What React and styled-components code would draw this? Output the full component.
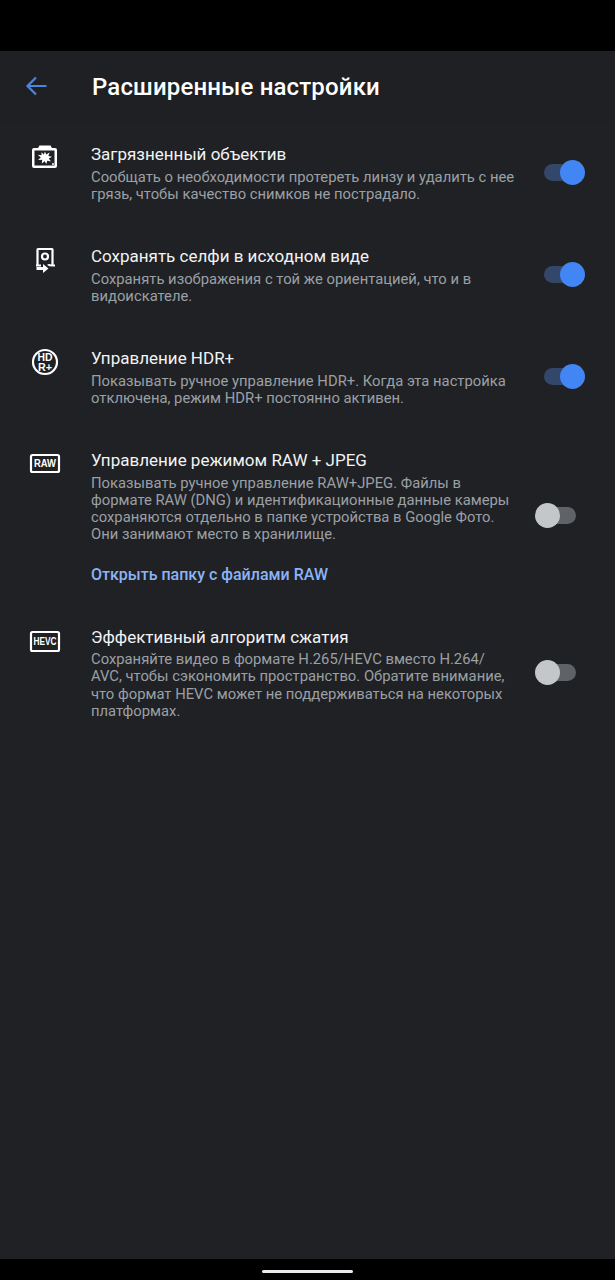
import React from 'react';
import styled, { createGlobalStyle } from 'styled-components';

const GlobalStyle = createGlobalStyle`
	html, body {
		margin: 0;
		padding: 0;
		background: #000;
	}
	* {
		box-sizing: border-box;
	}
`;

const Screen = styled.div`
	width: 615px;
	height: 1280px;
	display: flex;
	flex-direction: column;
	background: #202124;
	font-family: Roboto, 'Noto Sans', sans-serif;
	overflow: hidden;
`;

const StatusBar = styled.div`
	height: 51px;
	background: #000;
`;

const Header = styled.header`
	height: 71px;
	display: flex;
	align-items: center;
	padding-left: 24px;
	background: #1f2023;
`;

const BackIcon = styled.svg`
	width: 24px;
	height: 24px;
	margin-right: 44px;
	margin-top: -2px;
`;

const Title = styled.h1`
	margin: 0;
	font-size: 24px;
	font-weight: 500;
	line-height: 30px;
	letter-spacing: 0.15px;
	color: #fff;
`;

const List = styled.main`
	flex: 1;
	display: flex;
	flex-direction: column;
	gap: 43.2px;
	padding: 22px 30px 0;
`;

const Row = styled.section`
	display: flex;
	align-items: center;
`;

const IconBox = styled.svg`
	flex: none;
	align-self: flex-start;
	width: 30px;
	height: 30px;
	margin-right: 31px;
	overflow: visible;
`;

const IconText = styled.text`
	font-family: 'Liberation Sans', sans-serif;
	font-weight: 700;
	fill: #fff;
	text-anchor: middle;
`;

const Body = styled.div`
	width: 427px;
	flex: none;
`;

const RowTitle = styled.div`
	font-size: 17px;
	line-height: 21px;
	color: #f1f3f4;
`;

const RowText = styled.p`
	margin: 3.5px 0 0;
	font-size: 14.8px;
	line-height: 17.2px;
	color: #9aa0a6;
`;

const RowLink = styled.a`
	display: block;
	margin-top: 21px;
	font-size: 16px;
	font-weight: 500;
	line-height: 19px;
	color: #8ab4f8;
`;

const Switch = styled.div`
	position: relative;
	flex: none;
	width: 32px;
	height: 17px;
	margin: 0 0 2px 26px;
	border-radius: 9px;
	background: ${(props) => (props.on ? '#33476b' : '#5f6368')};
`;

const Knob = styled.span`
	position: absolute;
	top: -4px;
	left: ${(props) => (props.on ? '16px' : '-9px')};
	width: 25px;
	height: 25px;
	border-radius: 50%;
	background: ${(props) => (props.on ? '#4285f4' : '#c4c7c9')};
`;

const NavBar = styled.div`
	height: 21px;
	background: #000;
	display: flex;
	justify-content: center;
	padding-top: 11px;
`;

const Pill = styled.div`
	width: 91px;
	height: 3px;
	border-radius: 2px;
	background: #e8eaed;
`;

const LensIcon = () => (
	<IconBox viewBox="0 0 30 30">
		<path
			fill="#fff"
			fillRule="evenodd"
			d="M8 4 L9.5 1.5 H20.5 L22 4 H25 Q27 4 27 6 V22 Q27 24 25 24 H4 Q2 24 2 22 V6 Q2 4 4 4 Z M4.5 6.5 V21.5 H24.5 V6.5 Z"
		/>
		<path
			fill="#fff"
			d="M15 7.5 L16.2 10.6 L19.6 8.6 L18.4 12 L22 12.8 L18.8 14.6 L21 17.6 L17.2 16.8 L16.4 20 L14.6 17.2 L11.8 19.4 L12.2 15.8 L8 16 L10.8 13.4 L7.8 10.8 L11.6 11.2 L11.4 8.2 L13.8 10.4 Z"
		/>
		<circle cx="23" cy="20" r="1" fill="#fff" />
	</IconBox>
);

const SelfieIcon = () => (
	<IconBox viewBox="0 0 30 30">
		<path
			fill="none"
			stroke="#fff"
			strokeWidth="2.2"
			d="M7.5 19 V3.5 Q7.5 3 8 3 H22 Q22.5 3 22.5 3.5 V19"
		/>
		<circle cx="15" cy="10.5" r="3" fill="none" stroke="#fff" strokeWidth="2.2" />
		<path fill="none" stroke="#fff" strokeWidth="2" d="M6 19.5 H11 M18 19.5 C18.5 18.5 19.5 19.5 25 19.5" />
		<path fill="#fff" d="M6.5 21 H13 V18 L18.5 22.5 L13 27 V24 H6.5 Z" />
	</IconBox>
);

const HdrIcon = () => (
	<IconBox viewBox="0 0 30 30">
		<circle cx="15" cy="14" r="12" fill="none" stroke="#fff" strokeWidth="2.2" />
		<IconText x="15" y="13" fontSize="11" textLength="15" lengthAdjust="spacingAndGlyphs">
			HD
		</IconText>
		<IconText x="15" y="22.5" fontSize="11" textLength="14" lengthAdjust="spacingAndGlyphs">
			R+
		</IconText>
	</IconBox>
);

const LabelIcon = ({ label, top, height, size, length }) => (
	<IconBox viewBox="0 0 30 30">
		<rect x="1" y={top} width="28" height={height} rx="1.5" fill="none" stroke="#fff" strokeWidth="2.2" />
		<IconText
			x="15"
			y={top + height / 2 + size * 0.36}
			fontSize={size}
			textLength={length}
			lengthAdjust="spacingAndGlyphs"
		>
			{label}
		</IconText>
	</IconBox>
);

const Toggle = ({ on }) => (
	<Switch on={on ? 1 : 0}>
		<Knob on={on ? 1 : 0} />
	</Switch>
);

const App = () => (
	<Screen>
		<GlobalStyle />
		<StatusBar />
		<Header>
			<BackIcon viewBox="0 0 24 24">
				<path
					fill="none"
					stroke="#4a86e0"
					strokeWidth="2.2"
					d="M22.5 12 H4 M12 3.5 L3.5 12 L12 20.5"
				/>
			</BackIcon>
			<Title>Расширенные настройки</Title>
		</Header>
		<List>
			<Row>
				<LensIcon />
				<Body>
					<RowTitle>Загрязненный объектив</RowTitle>
					<RowText>
						Сообщать о необходимости протереть линзу и удалить с нее грязь, чтобы качество снимков не
						пострадало.
					</RowText>
				</Body>
				<Toggle on />
			</Row>
			<Row>
				<SelfieIcon />
				<Body>
					<RowTitle>Сохранять селфи в исходном виде</RowTitle>
					<RowText>Сохранять изображения с той же ориентацией, что и в видоискателе.</RowText>
				</Body>
				<Toggle on />
			</Row>
			<Row>
				<HdrIcon />
				<Body>
					<RowTitle>Управление HDR+</RowTitle>
					<RowText>
						Показывать ручное управление HDR+. Когда эта настройка отключена, режим HDR+ постоянно активен.
					</RowText>
				</Body>
				<Toggle on />
			</Row>
			<Row>
				<LabelIcon label="RAW" top={5} height={17} size={11} length={22} />
				<Body>
					<RowTitle>Управление режимом RAW + JPEG</RowTitle>
					<RowText>
						Показывать ручное управление RAW+JPEG. Файлы в формате RAW (DNG) и идентификационные данные
						камеры сохраняются отдельно в папке устройства в Google Фото. Они занимают место в хранилище.
					</RowText>
					<RowLink>Открыть папку с файлами RAW</RowLink>
				</Body>
				<Toggle />
			</Row>
			<Row>
				<LabelIcon label="HEVC" top={5} height={19} size={11} length={23} />
				<Body>
					<RowTitle>Эффективный алгоритм сжатия</RowTitle>
					<RowText>
						Сохраняйте видео в формате H.265/HEVC вместо H.264/
						<br />
						AVC, чтобы сэкономить пространство. Обратите внимание, что формат HEVC может не поддерживаться на
						некоторых платформах.
					</RowText>
				</Body>
				<Toggle />
			</Row>
		</List>
		<NavBar>
			<Pill />
		</NavBar>
	</Screen>
);

export default App;
